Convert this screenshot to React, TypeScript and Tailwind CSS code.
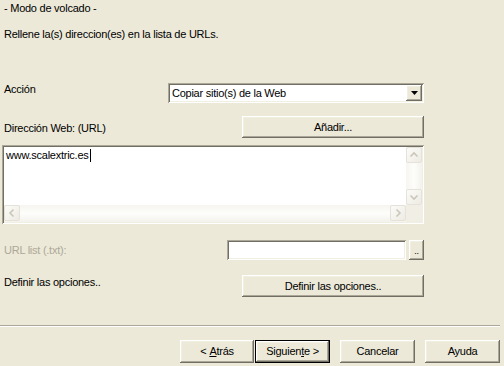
import type { ReactNode } from 'react';

// classic 3D borders
const raised = 'shadow-[inset_-1px_-1px_#716F64,inset_1px_1px_#FFFFFF,inset_-2px_-2px_#ACA899,inset_2px_2px_#F1EFE2]';
const sunken = 'shadow-[inset_1px_1px_#ACA899,inset_-1px_-1px_#FFFFFF,inset_2px_2px_#716F64,inset_-2px_-2px_#F1EFE2]';
const defaultBtn = 'shadow-[inset_0_0_0_1px_#000000,inset_-2px_-2px_#716F64,inset_2px_2px_#FFFFFF,inset_-3px_-3px_#ACA899,inset_3px_3px_#F1EFE2]';

const Btn = ({ children, className = '' }: { children?: ReactNode; className?: string }) => (
  <div className={`flex items-center justify-center bg-[#ECE9D8] ${raised} ${className}`}>{children}</div>
);

const ScrollBtn = ({ dir }: { dir: 'up' | 'down' | 'left' | 'right' }) => {
  const d = {
    up: 'M4.5 9.5 L8 6 L11.5 9.5',
    down: 'M4.5 6.5 L8 10 L11.5 6.5',
    left: 'M9.5 4.5 L6 8 L9.5 11.5',
    right: 'M6.5 4.5 L10 8 L6.5 11.5',
  }[dir];
  return (
    <div className="w-[16px] h-[16px] rounded-[2px] border border-[#E4E2D9] bg-gradient-to-br from-[#FBFBF8] to-[#EDEBE3] flex items-center justify-center">
      <svg width="16" height="16" viewBox="0 0 16 16" className="-m-px">
        <path d={d} fill="none" stroke="#CAC7BA" strokeWidth="1.6" />
      </svg>
    </div>
  );
};

export default function App() {
  return (
    <div className="w-[504px] h-[366px] overflow-hidden bg-[#ECE9D8] text-[11px] leading-[13px] tracking-[-0.25px] text-black font-['Liberation_Sans',Arial,sans-serif] flex flex-col">
      <div className="ml-[4px] mt-[2px]">- Modo de volcado -</div>
      <div className="ml-[4px] mt-[13px]">Rellene la(s) direccion(es) en la lista de URLs.</div>

      {/* Acción */}
      <div className="mt-[42px] flex h-[20px]">
        <div className="ml-[4px] mt-[0px] flex-1">Acción</div>
        <div className={`w-[256px] mr-[80px] bg-white p-[2px] flex ${sunken}`}>
          <div className="flex-1 pl-[2px] pt-[2px]">Copiar sitio(s) de la Web</div>
          <Btn className="w-[16px] h-[16px]">
            <svg width="7" height="4" viewBox="0 0 7 4">
              <path d="M0 0 H7 L3.5 4 Z" fill="#000" />
            </svg>
          </Btn>
        </div>
      </div>

      {/* Dirección Web */}
      <div className="mt-[13px] flex h-[22px]">
        <div className="ml-[4px] mt-[6px] flex-1">Dirección Web: (URL)</div>
        <Btn className="w-[182px] mr-[80px]">Añadir...</Btn>
      </div>

      {/* URL textarea */}
      <div className={`mt-[7px] ml-[2px] w-[422px] h-[79px] p-[2px] flex flex-col bg-white ${sunken}`}>
        <div className="flex flex-1 min-h-0">
          <div className="flex-1 pl-[2px] pt-[2px] flex items-start">
            <span>www.scalextric.es</span>
            <span className="inline-block w-px h-[13px] bg-black ml-px" />
          </div>
          <div className="w-[16px] flex flex-col justify-between bg-gradient-to-r from-[#F6F5F0] via-[#FDFDFB] to-[#F3F2EC]">
            <ScrollBtn dir="up" />
            <ScrollBtn dir="down" />
          </div>
        </div>
        <div className="flex h-[17px]">
          <div className="flex-1 flex justify-between bg-gradient-to-b from-[#F6F5F0] via-[#FDFDFB] to-[#F3F2EC]">
            <ScrollBtn dir="left" />
            <ScrollBtn dir="right" />
          </div>
          <div className="w-[16px] bg-[#F1EFE5]" />
        </div>
      </div>

      {/* URL list */}
      <div className="mt-[16px] flex h-[20px]">
        <div className="ml-[4px] mt-[4px] flex-1 text-[#ACA899]">URL list (.txt):</div>
        <div className={`w-[179px] bg-white ${sunken}`} />
        <Btn className="ml-[3px] w-[15px] mr-[80px] items-end pb-[4px] text-[9px] leading-[9px]">..</Btn>
      </div>

      {/* Opciones */}
      <div className="mt-[15px] flex h-[22px]">
        <div className="ml-[4px] mt-[1px] flex-1">Definir las opciones..</div>
        <Btn className="w-[182px] mr-[80px]">Definir las opciones..</Btn>
      </div>

      {/* separator */}
      <div className="mt-[28px] w-[500px] h-px bg-[#ACA899]" />
      <div className="w-[500px] h-px bg-white" />

      {/* wizard buttons */}
      <div className="mt-[13px] flex h-[23px]">
        <Btn className="ml-[180px] w-[74px]">
          &lt; <span className="underline ml-[3px]">A</span>trás
        </Btn>
        <div className={`ml-[1px] w-[75px] flex items-center justify-center bg-[#ECE9D8] ${defaultBtn}`}>
          Siguien<span className="underline">t</span>e &gt;
        </div>
        <Btn className="ml-[10px] w-[75px]">Cancelar</Btn>
        <Btn className="ml-[10px] w-[75px]">Ayuda</Btn>
      </div>
    </div>
  );
}
